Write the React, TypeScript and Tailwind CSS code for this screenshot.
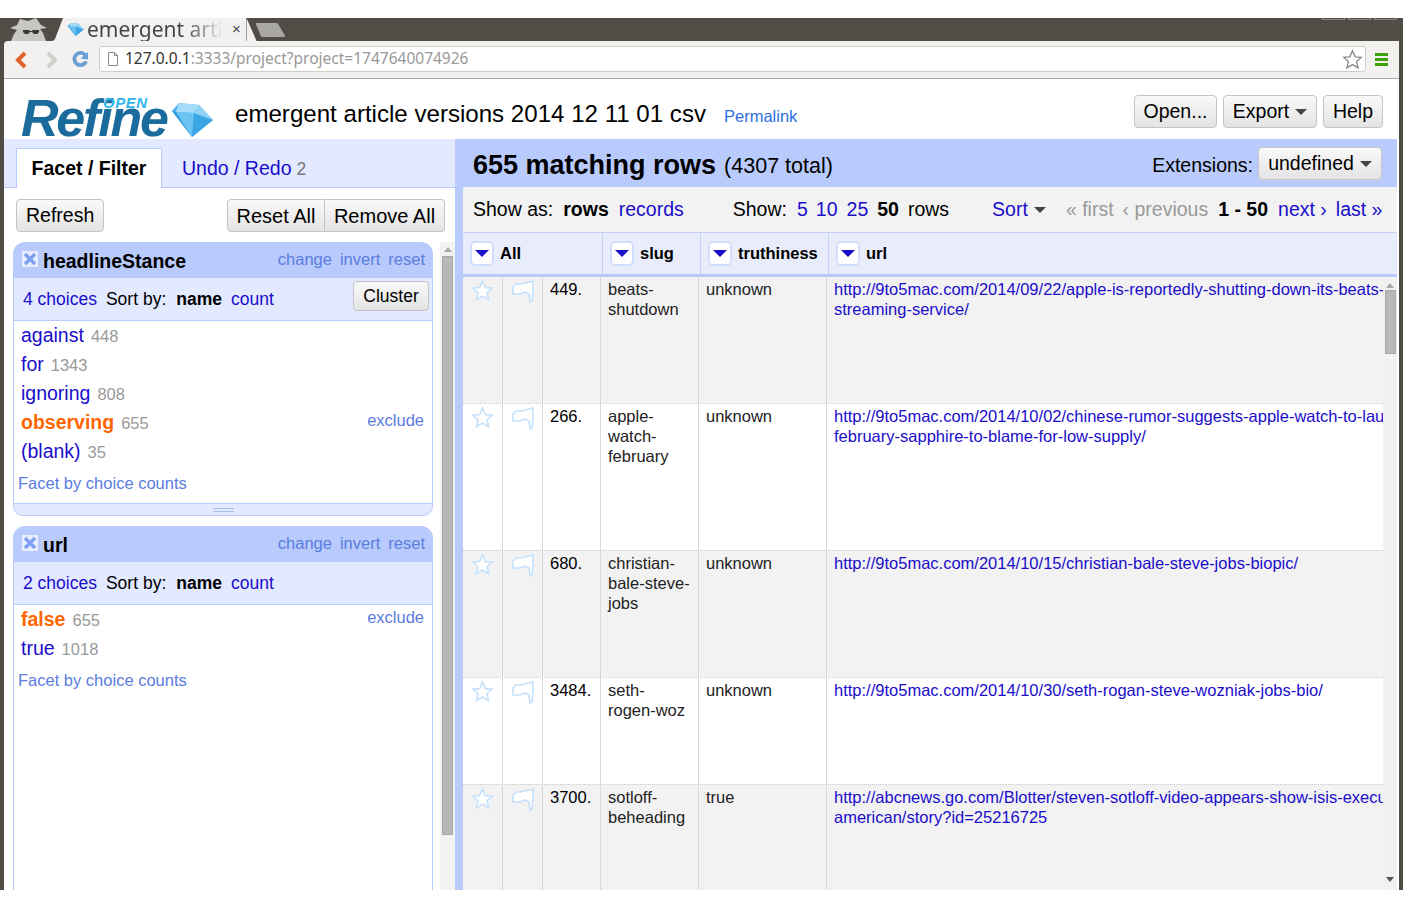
import React from 'react';

const btn = 'flex items-center border border-[#c4c4c4] rounded-[4px] bg-gradient-to-b from-[#f9f9f9] to-[#e4e4e4] text-black';

function Caret({ className = '' }: { className?: string }) {
  return <span className={`inline-block w-0 h-0 border-x-[6px] border-x-transparent border-t-[6px] border-t-[#444] ${className}`} />;
}

function Diamond({ className }: { className: string }) {
  return (
    <svg viewBox="0 0 44 36" className={className}>
      <polygon points="2,9 9,1 29,3 43,18 22,35" fill="#4fb2ec" />
      <polygon points="9,1 29,3 24,11 6,10" fill="#a5dcf8" />
      <polygon points="2,9 6,10 22,35" fill="#2f9be0" />
      <polygon points="6,10 24,11 22,35" fill="#6cc4f2" />
      <polygon points="24,11 43,18 22,35" fill="#3ba6e6" />
      <polygon points="29,3 43,18 24,11" fill="#8fd2f6" />
    </svg>
  );
}

function Star() {
  return (
    <svg viewBox="0 0 24 24" className="w-[23px] h-[23px]" fill="#fff" stroke="#c4e1fb" strokeWidth="1.6">
      <polygon points="12,2 15,9 22,9.6 16.7,14.4 18.4,21.6 12,17.8 5.6,21.6 7.3,14.4 2,9.6 9,9" />
    </svg>
  );
}

function Flag() {
  return (
    <svg viewBox="0 0 24 24" className="w-[24px] h-[24px]" fill="#fff" stroke="#c4e1fb" strokeWidth="1.6">
      <path d="M2 8 L5 5 L10 5 L14 4 L22 2 L22 12 L21 22 L19 23 L18 15 L14 13 L9 15 L2 15 Z" />
    </svg>
  );
}

function RemoveIcon() {
  return (
    <span className="flex items-center justify-center w-[16px] h-[16px] -mt-[2px] bg-[#e8eeff]">
      <svg viewBox="0 0 16 16" className="w-[16px] h-[16px]" stroke="#7f9ff0" strokeWidth="3.4">
        <path d="M3 3 L13 13 M13 3 L3 13" />
      </svg>
    </span>
  );
}

function FacetHeader({ title }: { title: string }) {
  return (
    <div className="flex items-center h-[36px] bg-[#b9cbfc] rounded-t-[12px] pl-[9px] pr-[8px]">
      <RemoveIcon />
      <span className="ml-[5px] mt-[3px] font-bold text-[19.5px] text-black">{title}</span>
      <div className="ml-auto flex gap-[8px] text-[16.5px] text-[#5b7ce0] -mt-[2px]">
        <span>change</span>
        <span>invert</span>
        <span>reset</span>
      </div>
    </div>
  );
}

function FacetBar({ choices, cluster }: { choices: string; cluster?: boolean }) {
  return (
    <div className="flex items-center h-[43px] bg-[#e3e9ff] border-x border-b border-[#b9cbfc] pl-[9px] pr-[3px] text-[17.5px] text-black">
      <span className="text-[#1a0dcb]">{choices}</span>
      <span className="ml-[9px]">Sort by:</span>
      <span className="ml-[10px] font-bold">name</span>
      <span className="ml-[9px] text-[#1a0dcb]">count</span>
      {cluster && <span className={`${btn} ml-auto w-[76px] justify-center h-[30px] -mt-[6px]`}>Cluster</span>}
    </div>
  );
}

function Choice({ name, count, selected }: { name: string; count: number; selected?: boolean }) {
  return (
    <div className="relative flex items-baseline h-[29px] pl-[7px]">
      <span className={selected ? 'text-[19.5px] font-bold text-[#f60]' : 'text-[19.5px] text-[#1a0dcb]'}>{name}</span>
      <span className="ml-[7px] text-[16.5px] text-[#999]">{count}</span>
      {selected && <span className="ml-auto mr-[8px] text-[16.5px] text-[#5b7ce0] -translate-y-[3px]">exclude</span>}
    </div>
  );
}

const rows = [
  {
    h: 'h-[126px]', bg: 'bg-[#f2f2f2]', n: '449.', slug: ['beats-', 'shutdown'], truth: 'unknown',
    url: ['http://9to5mac.com/2014/09/22/apple-is-reportedly-shutting-down-its-beats-', 'streaming-service/'],
  },
  {
    h: 'h-[147px]', bg: 'bg-white', n: '266.', slug: ['apple-', 'watch-', 'february'], truth: 'unknown',
    url: ['http://9to5mac.com/2014/10/02/chinese-rumor-suggests-apple-watch-to-launch-in-', 'february-sapphire-to-blame-for-low-supply/'],
  },
  {
    h: 'h-[127px]', bg: 'bg-[#f2f2f2]', n: '680.', slug: ['christian-', 'bale-steve-', 'jobs'], truth: 'unknown',
    url: ['http://9to5mac.com/2014/10/15/christian-bale-steve-jobs-biopic/'],
  },
  {
    h: 'h-[107px]', bg: 'bg-white', n: '3484.', slug: ['seth-', 'rogen-woz'], truth: 'unknown',
    url: ['http://9to5mac.com/2014/10/30/seth-rogan-steve-wozniak-jobs-bio/'],
  },
  {
    h: 'h-[107px]', bg: 'bg-[#f2f2f2]', n: '3700.', slug: ['sotloff-', 'beheading'], truth: 'true',
    url: ['http://abcnews.go.com/Blotter/steven-sotloff-video-appears-show-isis-execution-', 'american/story?id=25216725'],
  },
];

function ColumnHeader({ label, className }: { label: string; className: string }) {
  return (
    <div className={`flex items-center h-full border-r border-[#c4d2f8] pl-[7px] ${className}`}>
      <span className="flex items-center justify-center w-[24px] h-[25px] bg-white border-2 border-[#d2defc] rounded-[5px]">
        <span className="w-0 h-0 border-x-[7px] border-x-transparent border-t-[7px] border-t-[#1a0dcb]" />
      </span>
      <span className="ml-[6px] font-bold text-[16.5px] text-black">{label}</span>
    </div>
  );
}

export default function App() {
  return (
    <div className="w-[1403px] h-[908px] overflow-hidden bg-white font-['Liberation_Sans',Arial,sans-serif]">
      <div className="h-[18px]" />
      <div className="h-[872px] bg-[#514d46] px-[4px] flex flex-col">
        {/* Browser tab strip */}
        <div className="flex h-[23px] -mx-[4px] pl-[8px] items-stretch">
          <svg viewBox="0 0 44 23" className="w-[44px] h-[23px]">
            <path d="M9 7 L12 1 L20 3 L28 0 L33 7 L39 10 L32 11 L35 15 L38 23 L3 23 L6 16 L9 12 L2 10 Z" fill="#c9c7c3" />
            <path d="M15 12 h6 l1 1 h2 l1 -1 h6 v2 l-2 2 h-3 l-2 -2 h-2 l-2 2 h-3 l-2 -2 Z" fill="#3a3833" />
          </svg>
          <svg viewBox="0 0 10 23" className="w-[10px] h-[23px] ml-[1px]">
            <polygon points="10,0 10,23 0,23 2,21" fill="#f2f1f0" />
          </svg>
          <div className="flex items-center w-[183px] bg-[#f2f1f0] pl-[4px]">
            <Diamond className="w-[17px] h-[15px]" />
            <span className="ml-[3px] w-[136px] overflow-hidden whitespace-nowrap text-[21px] leading-[23px] font-['Noto_Sans',sans-serif] bg-gradient-to-r from-[#444] from-[70%] to-[#f2f1f0] bg-clip-text text-transparent">
              emergent arti
            </span>
            <span className="ml-[9px] text-[15px] text-[#444]">×</span>
          </div>
          <svg viewBox="0 0 10 23" className="w-[11px] h-[23px]">
            <polygon points="0,0 10,23 0,23" fill="#f2f1f0" />
          </svg>
          <svg viewBox="0 0 34 16" className="w-[34px] h-[16px] mt-[4px] -ml-[3px]">
            <path d="M3 2 L23 2 L30 14 L8 14 Z" fill="#a9a7a2" stroke="#a9a7a2" strokeWidth="2" strokeLinejoin="round" />
          </svg>
          <div className="ml-auto mr-[6px] flex gap-[3px] items-start">
            <span className="w-[23px] h-[2px] border-x border-b border-[#8a867e]" />
            <span className="w-[23px] h-[2px] border-x border-b border-[#8a867e]" />
            <span className="w-[23px] h-[2px] border-x border-b border-[#8a867e]" />
          </div>
        </div>

        {/* Browser toolbar */}
        <div className="flex items-center h-[38px] bg-[#f2f1f0] border-b border-[#aaa] rounded-tl-[4px]">
          <svg viewBox="0 0 12 18" className="w-[12px] h-[18px] ml-[11px]" fill="none" stroke="#e2602a" strokeWidth="4">
            <path d="M10 2 L3 9 L10 16" />
          </svg>
          <svg viewBox="0 0 12 18" className="w-[12px] h-[18px] ml-[19px]" fill="none" stroke="#d2d0cd" strokeWidth="4">
            <path d="M2 2 L9 9 L2 16" />
          </svg>
          <svg viewBox="0 0 18 18" className="w-[17px] h-[17px] ml-[14px]" fill="none">
            <path d="M14.5 5 A6.5 6.5 0 1 0 15 11" stroke="#6b9fd6" strokeWidth="4" />
            <polygon points="17,1 17,9 9,8" fill="#6b9fd6" />
          </svg>
          <div className="flex items-center ml-[10px] w-[1267px] h-[26px] bg-white border border-[#cfcdca] rounded-[3px] -mt-[1px]">
            <svg viewBox="0 0 12 14" className="w-[12px] h-[14px] ml-[7px]" fill="#fff" stroke="#8a8a8a">
              <path d="M1.5 .5 H7.5 L10.5 3.5 V13.5 H1.5 Z M7.5 .5 V3.5 H10.5" />
            </svg>
            <span className="ml-[6px] text-[15.5px] font-['Noto_Sans',sans-serif] text-[#999]">
              <span className="text-[#333]">127.0.0.1</span>:3333/project?project=1747640074926
            </span>
            <svg viewBox="0 0 24 24" className="ml-auto mr-[2px] w-[21px] h-[21px]" fill="#fff" stroke="#888" strokeWidth="1.5">
              <polygon points="12,2 15,9 22,9.6 16.7,14.4 18.4,21.6 12,17.8 5.6,21.6 7.3,14.4 2,9.6 9,9" />
            </svg>
          </div>
          <div className="flex flex-col gap-[2px] ml-[9px] w-[13px] -mt-[1px]">
            <span className="h-[3px] bg-[#3ba208]" />
            <span className="h-[3px] bg-[#3ba208]" />
            <span className="h-[3px] bg-[#3ba208]" />
          </div>
        </div>

        {/* App page */}
        <div className="flex-1 min-h-0 flex flex-col bg-white">
          {/* Project header */}
          <div className="flex items-center h-[60px] shrink-0">
            <div className="relative w-[213px] h-[60px] ml-[17px] shrink-0">
              <span className="absolute left-0 top-[3px] text-[52px] leading-[72px] font-bold italic text-[#1b6c9c] tracking-[-2.2px]">
                Refine
              </span>
              <span className="absolute left-[82px] top-[16px] text-[15px] leading-[16px] font-bold italic text-[#2fb6ec] tracking-[0.5px]">
                OPEN
              </span>
              <Diamond className="absolute left-[149px] top-[23px] w-[44px] h-[36px]" />
            </div>
            <span className="ml-[1px] mt-[10px] text-[24.1px] text-black whitespace-nowrap">
              emergent article versions 2014 12 11 01 csv
            </span>
            <span className="ml-[18px] mt-[14px] text-[16.5px] text-[#2e6fe0]">Permalink</span>
            <div className="ml-auto mr-[16px] mt-[5px] flex gap-[6px] text-[19.5px]">
              <span className={`${btn} h-[33px] w-[83px] justify-center`}>Open...</span>
              <span className={`${btn} h-[33px] w-[94px] justify-center gap-[6px]`}>
                Export <Caret />
              </span>
              <span className={`${btn} h-[33px] w-[60px] justify-center`}>Help</span>
            </div>
          </div>

          <div className="flex flex-1 min-h-0">
            {/* Left panel */}
            <div className="w-[451px] shrink-0 flex flex-col">
              <div className="flex items-end h-[49px] bg-[#e3e9ff] border-b border-[#b9cbfc] pl-[12px] text-[19.5px]">
                <span className="flex items-center justify-center w-[146px] h-[40px] -mb-[1px] bg-white border-x border-t border-[#b9cbfc] font-bold text-black">
                  Facet / Filter
                </span>
                <span className="flex items-baseline ml-[20px] h-[39px] pt-[6px] text-[#1a0dcb]">
                  Undo / Redo<span className="ml-[5px] text-[17.5px] text-[#777]">2</span>
                </span>
              </div>
              <div className="flex h-[54px] shrink-0 items-start pt-[11px] pl-[12px] text-[19.5px]">
                <span className={`${btn} h-[33px] px-[9px] pt-[1px]`}>Refresh</span>
                <span className={`${btn} h-[33px] w-[98px] justify-center pt-[1px] ml-auto rounded-r-none text-[20px]`}>Reset All</span>
                <span className={`${btn} h-[33px] w-[120px] justify-center pt-[1px] mr-[10px] rounded-l-none border-l-0 text-[20px]`}>Remove All</span>
              </div>
              <div className="flex flex-1 min-h-0 overflow-hidden">
                <div className="w-[420px] ml-[9px] shrink-0 flex flex-col">
                  <FacetHeader title="headlineStance" />
                  <FacetBar choices="4 choices" cluster />
                  <div className="h-[182px] bg-white border-x border-[#b9cbfc]">
                    <Choice name="against" count={448} />
                    <Choice name="for" count={1343} />
                    <Choice name="ignoring" count={808} />
                    <Choice name="observing" count={655} selected />
                    <Choice name="(blank)" count={35} />
                    <div className="pl-[4px] pt-[5px] text-[16.5px] text-[#5b7ce0]">Facet by choice counts</div>
                  </div>
                  <div className="flex items-center justify-center h-[13px] bg-[#e3e9ff] border border-[#b9cbfc] rounded-b-[10px]">
                    <span className="w-[21px] h-[4px] border-y border-[#a9bdf0]" />
                  </div>
                  <div className="mt-[10px]">
                    <FacetHeader title="url" />
                    <FacetBar choices="2 choices" />
                  </div>
                  <div className="flex-1 bg-white border-x border-[#b9cbfc]">
                    <Choice name="false" count={655} selected />
                    <Choice name="true" count={1018} />
                    <div className="pl-[4px] pt-[5px] text-[16.5px] text-[#5b7ce0]">Facet by choice counts</div>
                  </div>
                </div>
                <div className="ml-[7px] w-[15px] bg-[#f2f2f2] flex flex-col items-center pt-[5px]">
                  <span className="w-0 h-0 border-x-[4px] border-x-transparent border-b-[5px] border-b-[#aaa]" />
                  <div className="mt-[4px] w-[11px] h-[579px] bg-[#b8b8b8] border border-[#a9a9a9]" />
                </div>
              </div>
            </div>

            {/* Right panel */}
            <div className="w-[942px] shrink-0 flex flex-col border-l-[8px] border-[#b9cbfc]">
              <div className="flex items-center h-[48px] shrink-0 bg-[#b9cbfc] -ml-[8px] pl-[18px] pr-[15px] text-black">
                <span className="text-[27px] font-bold mt-[4px]">655 matching rows</span>
                <span className="ml-[8px] mt-[6px] text-[21.5px]">(4307 total)</span>
                <span className="ml-auto text-[19.5px] mt-[5px]">Extensions:</span>
                <span className={`${btn} ml-[5px] h-[33px] w-[124px] justify-center gap-[6px] text-[19.5px] pt-[2px] -mt-[0px]`}>
                  undefined <Caret />
                </span>
              </div>
              <div className="flex items-center h-[45px] shrink-0 bg-[#f2f2f2] pl-[10px] text-[19.5px] text-black whitespace-nowrap">
                <span>Show as:</span>
                <span className="ml-[10px] font-bold">rows</span>
                <span className="ml-[10px] text-[#1a0dcb]">records</span>
                <span className="ml-[49px]">Show:</span>
                <span className="ml-[10px] text-[#1a0dcb]">5</span>
                <span className="ml-[8px] text-[#1a0dcb]">10</span>
                <span className="ml-[9px] text-[#1a0dcb]">25</span>
                <span className="ml-[9px] font-bold">50</span>
                <span className="ml-[9px]">rows</span>
                <span className="ml-[43px] text-[#1a0dcb]">Sort</span>
                <Caret className="ml-[6px]" />
                <span className="ml-[20px] text-[#999]">« first</span>
                <span className="ml-[9px] text-[#999]">‹ previous</span>
                <span className="ml-[10px] font-bold">1 - 50</span>
                <span className="ml-[10px] text-[#1a0dcb]">next ›</span>
                <span className="ml-[9px] text-[#1a0dcb]">last »</span>
              </div>

              {/* Data table */}
              <div className="flex h-[45px] shrink-0 bg-[#e9edfb] border-t border-[#c4d2f8] border-b-[3px] border-b-[#b9cbfc]">
                <ColumnHeader label="All" className="w-[140px]" />
                <ColumnHeader label="slug" className="w-[98px]" />
                <ColumnHeader label="truthiness" className="w-[128px]" />
                <ColumnHeader label="url" className="flex-1 border-r-0" />
              </div>
              <div className="flex flex-1 min-h-0 overflow-hidden">
                <div className="w-[920px] shrink-0 text-[16.5px] leading-[20px] text-black">
                  {rows.map((row) => (
                    <div key={row.n} className={`flex ${row.h} ${row.bg} border-t border-dotted border-[#ccc] first:border-t-0`}>
                      <div className="w-[40px] shrink-0 border-r border-[#d9d9d9] pl-[8px] pt-[2px]">
                        <Star />
                      </div>
                      <div className="w-[40px] shrink-0 border-r border-[#d9d9d9] pl-[8px] pt-[2px]">
                        <Flag />
                      </div>
                      <div className="w-[58px] shrink-0 border-r border-[#d9d9d9] pl-[7px] pt-[2px]">{row.n}</div>
                      <div className="w-[98px] shrink-0 border-r border-[#d9d9d9] pl-[7px] pt-[2px] text-[#222]">
                        {row.slug.map((line) => (
                          <div key={line}>{line}</div>
                        ))}
                      </div>
                      <div className="w-[128px] shrink-0 border-r border-[#d9d9d9] pl-[7px] pt-[2px] text-[#222]">{row.truth}</div>
                      <div className="flex-1 min-w-0 overflow-hidden pl-[7px] pt-[2px] text-[#1a0dcb] whitespace-nowrap">
                        {row.url.map((line) => (
                          <div key={line}>{line}</div>
                        ))}
                      </div>
                    </div>
                  ))}
                </div>
                <div className="w-[14px] shrink-0 bg-[#f1f1f1] flex flex-col items-center pt-[6px]">
                  <span className="w-0 h-0 border-x-[4px] border-x-transparent border-b-[5px] border-b-[#aaa]" />
                  <div className="mt-[2px] w-[11px] h-[64px] shrink-0 bg-[#b8b8b8] border border-[#a9a9a9]" />
                  <span className="mt-[523px] w-0 h-0 border-x-[4px] border-x-transparent border-t-[5px] border-t-[#555]" />
                </div>
              </div>
            </div>
          </div>
        </div>
      </div>
    </div>
  );
}
